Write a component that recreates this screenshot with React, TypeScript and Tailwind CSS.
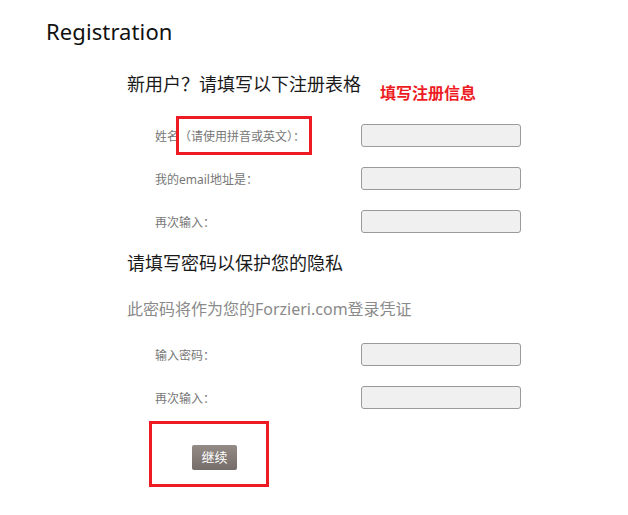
const cjk = '"Noto Sans", "Noto Sans CJK SC", sans-serif';

const Field = ({ label, marked }: { label: string; marked?: boolean }) => (
  <div className="relative flex items-center h-[23px] mb-[20px]">
    <div className="w-[234px] pl-[28px] text-[12px] text-[#777] leading-none pt-[3px]">{label}</div>
    <input
      type="text"
      className="w-[160px] h-[23px] bg-[#f0f0f0] border-[1.5px] border-[#9a9a9a] rounded-[3px] outline-none"
    />
    {marked && (
      <div className="absolute left-[49px] top-[-8px] w-[136px] h-[39px] border-[3px] border-[#ed1c24]" />
    )}
  </div>
);

export default function App() {
  return (
    <div className="min-h-[515px] w-[628px] bg-white" style={{ fontFamily: cjk }}>
      <div className="pl-[46px] pt-[17px]">
        <h1 className="text-[22px] leading-[28px] text-[#111] tracking-[0.1px]">Registration</h1>
      </div>

      <div className="pl-[127px] pt-[29px]">
        <div className="flex items-start">
          <h2 className="text-[18px] leading-[20px] text-[#1a1a1a]">
            新用户？请填写以下注册表格
          </h2>
          <span className="ml-[19px] mt-[9px] text-[16px] leading-[20px] font-bold text-[#ed1c24]">
            填写注册信息
          </span>
        </div>

        <div className="pt-[21px]">
          <Field label="姓名（请使用拼音或英文）：" marked />
          <Field label="我的email地址是：" />
          <Field label="再次输入：" />
        </div>

        <h2 className="mt-[13px] text-[18px] leading-[20px] text-[#1a1a1a]">请填写密码以保护您的隐私</h2>

        <p className="mt-[26px] text-[16px] leading-[20px] text-[#8a8a8a]">
          此密码将作为您的Forzieri.com登录凭证
        </p>

        <div className="pt-[24px]">
          <Field label="输入密码：" />
          <Field label="再次输入：" />
        </div>

        <div className="ml-[22px] mt-[-8px] w-[120px] h-[66px] border-[3px] border-[#ed1c24] pl-[40px] pt-[20px]">
          <button className="w-[45px] h-[25px] rounded-[2px] bg-gradient-to-b from-[#948b87] to-[#756d69] text-white text-[13px] leading-none">
            继续
          </button>
        </div>
      </div>
    </div>
  );
}
